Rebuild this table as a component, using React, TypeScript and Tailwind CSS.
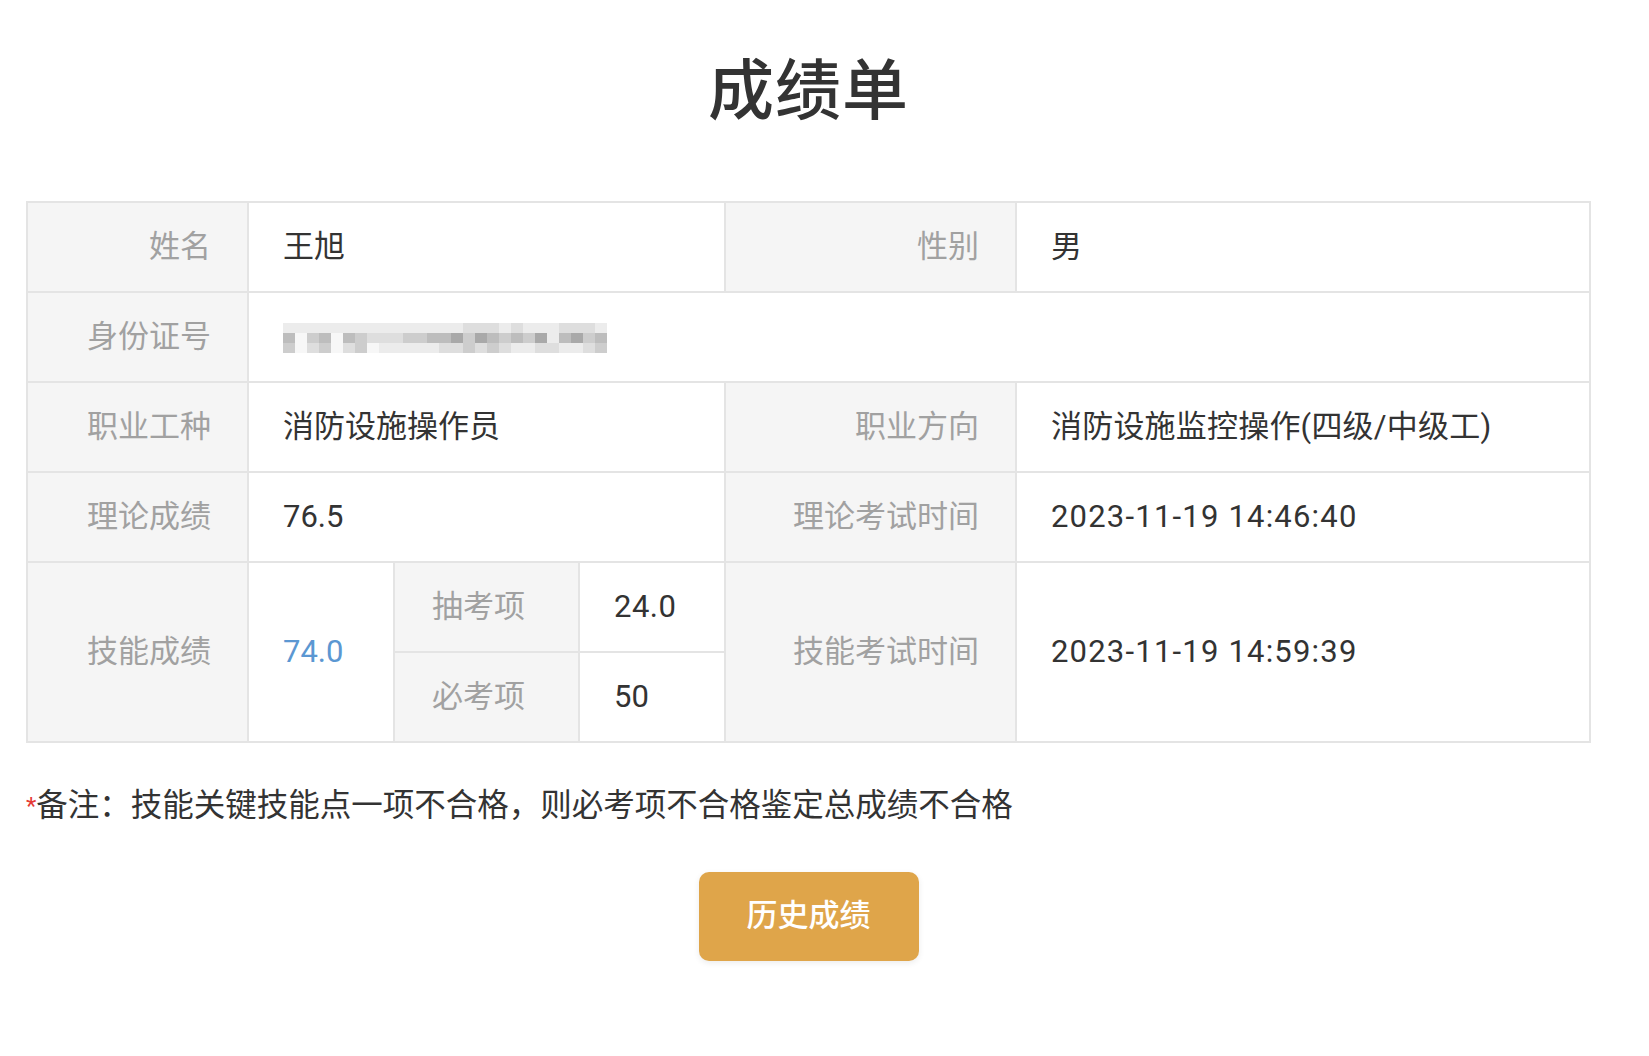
import React from "react";

const FONT = "font-['Roboto','Noto_Sans_CJK_SC',sans-serif]";

// pixelated ID number (mosaic)
const MOSAIC = [
  "eeeeeeeeeeeeeeedddedeeedddeeeeeedddeeeee",
  "bfcbfbcdddccbbacabcbcaebacbbbcbdddddd",
  "cfdcfdcfeeeeeddcdcdeeddeedcddeddddd",
];

function Mosaic() {
  const cols = 27;
  const shade = (r: number, c: number) => {
    const s = MOSAIC[r] ?? "";
    const ch = s[c % s.length] ?? "e";
    const map: Record<string, string> = {
      a: "#a9a9a9",
      b: "#bdbdbd",
      c: "#cdcdcd",
      d: "#dedede",
      e: "#ececec",
      f: "#f7f7f7",
    };
    return map[ch] ?? "#eeeeee";
  };
  return (
    <svg width={324} height={30} viewBox="0 0 324 30" className="blur-[0.6px]">
      {Array.from({ length: 3 }).map((_, r) =>
        Array.from({ length: cols }).map((_, c) => (
          <rect key={`${r}-${c}`} x={c * 12} y={r * 10} width={12} height={10} fill={shade(r, c)} />
        ))
      )}
    </svg>
  );
}

function Label({ children, className = "" }: { children: React.ReactNode; className?: string }) {
  return (
    <div className={`bg-[#f5f5f5] flex items-center justify-end pr-[36px] pt-[1px] text-[31px] text-[#a1a1a1] ${className}`}>
      {children}
    </div>
  );
}

function Value({ children, className = "" }: { children: React.ReactNode; className?: string }) {
  return (
    <div className={`bg-white flex items-center pl-[34px] pt-[1px] text-[31px] text-[#333333] ${className}`}>
      {children}
    </div>
  );
}

export default function App() {
  return (
    <div className={`min-h-screen bg-white ${FONT}`}>
      <div className="ml-[26px] w-[1565px] flex flex-col items-center">
        <h1 className="mt-[59px] text-[66px] leading-none font-medium text-[#333333] tracking-[1px]">成绩单</h1>

        <div className="mt-[76px] w-full grid grid-cols-[219px_144px_183px_144px_289px_1fr] grid-rows-[88px_88px_88px_88px_88px_88px] gap-[2px] p-[2px] bg-[#e4e4e4]">
          <Label>姓名</Label>
          <Value className="col-span-3">王旭</Value>
          <Label>性别</Label>
          <Value>男</Value>

          <Label>身份证号</Label>
          <Value className="col-span-5">
            <Mosaic />
          </Value>

          <Label>职业工种</Label>
          <Value className="col-span-3">消防设施操作员</Value>
          <Label>职业方向</Label>
          <Value className="tracking-[0.2px]">消防设施监控操作(四级/中级工)</Value>

          <Label>理论成绩</Label>
          <Value className="col-span-3">76.5</Value>
          <Label>理论考试时间</Label>
          <Value className="tracking-[1.2px]">2023-11-19 14:46:40</Value>

          <Label className="row-span-2">技能成绩</Label>
          <Value className="row-span-2 !text-[#5b97d2]">74.0</Value>
          <div className="bg-[#f5f5f5] flex items-center justify-center pr-[16px] pt-[1px] text-[31px] text-[#a1a1a1]">抽考项</div>
          <Value className="tracking-[0.5px]">24.0</Value>
          <Label className="row-span-2">技能考试时间</Label>
          <Value className="row-span-2 tracking-[1.2px]">2023-11-19 14:59:39</Value>

          <div className="bg-[#f5f5f5] flex items-center justify-center pr-[16px] pt-[1px] text-[31px] text-[#a1a1a1]">必考项</div>
          <Value>50</Value>
        </div>

        <p className="self-start mt-[43px] text-[31.5px] leading-[40px] text-[#333333]">
          <span className="text-[#e53935] text-[24px] align-top">*</span>备注：技能关键技能点一项不合格，则必考项不合格鉴定总成绩不合格
        </p>

        <button className="mt-[46px] w-[220px] h-[89px] rounded-[10px] bg-[#dfa54a] text-white text-[31px] font-medium shadow-[0_2px_6px_rgba(0,0,0,0.08)]">
          历史成绩
        </button>
      </div>
    </div>
  );
}
